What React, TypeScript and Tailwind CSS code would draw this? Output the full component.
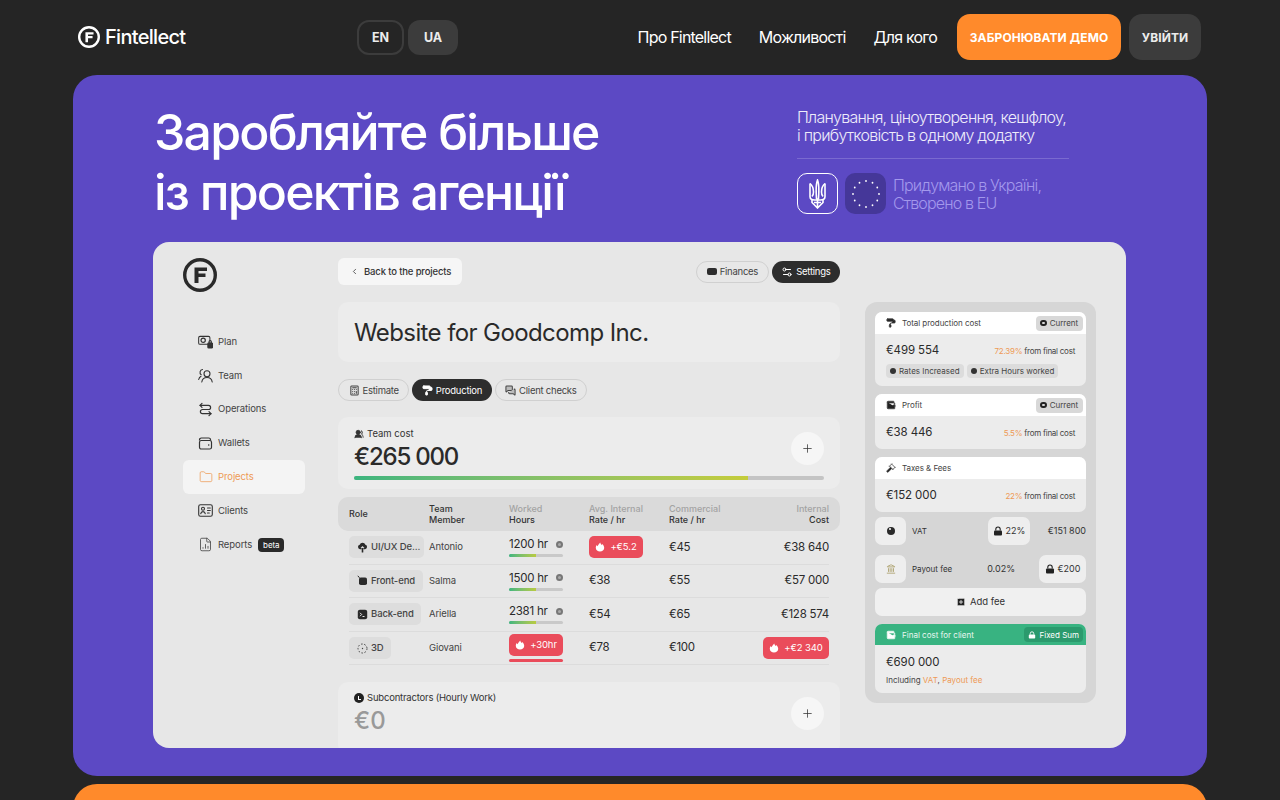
import React from 'react';
import {
  Calculator,
  ChevronLeft,
  FileChartColumn,
  Folder,
  Gavel,
  Landmark,
  MessagesSquare,
  PaintRoller,
  Plus,
  Settings2,
  SquarePlus,
  UsersRound,
  Wallet,
} from 'lucide-react';

const FONT = "font-['Inter','Noto_Sans',sans-serif]";

const FLogo = ({ size, stroke, color }: { size: number; stroke: number; color: string }) => (
  <svg width={size} height={size} viewBox="0 0 34 34" fill="none">
    <circle cx="17" cy="17" r={17 - (stroke * 34) / size / 2} stroke={color} strokeWidth={(stroke * 34) / size} />
    <path d="M11.500 9.500H24V13H15.500V15.500H22.500V19H15.500V25H11.500Z" fill={color} />
  </svg>
);

const PlanIcon = () => (
  <svg width="16" height="16" viewBox="0 0 16 16" fill="none" stroke="#333" strokeWidth="1.100">
    <rect x="0.700" y="2" width="12" height="8.500" rx="1.500" />
    <circle cx="5.500" cy="6.200" r="2.300" strokeWidth="1.300" />
    <rect x="10.500" y="9" width="5" height="5.500" rx="0.800" fill="#333" />
    <path d="M11.700 9V7.800a1.300 1.300 0 0 1 2.600 0V9" />
  </svg>
);

const TeamIcon = () => (
  <svg width="15" height="15" viewBox="0 0 15 15" fill="none" stroke="#333" strokeWidth="1.100" strokeLinecap="round">
    <circle cx="9" cy="5.800" r="3" />
    <path d="M3.800 14c.4-2.800 2.500-4.500 5.200-4.500s4.800 1.700 5.200 4.500" />
    <path d="M4.500 1.500a2.900 2.900 0 0 0-1.300 5.200M.7 11.500c.3-1.500 1-2.500 2.300-3.200" />
  </svg>
);

const OperationsIcon = () => (
  <svg width="15" height="15" viewBox="0 0 15 15" fill="none" stroke="#333" strokeWidth="1.200" strokeLinecap="round" strokeLinejoin="round">
    <path d="M4 1.300 2 3.300 4 5.300" />
    <path d="M2 3.300H10.500a2.100 2.100 0 0 1 0 4.200H4.500a2.100 2.100 0 0 0 0 4.200H13" />
    <path d="M11 9.700 13 11.700 11 13.700" />
  </svg>
);

const WalletIcon = () => (
  <svg width="15" height="15" viewBox="0 0 15 15" fill="none" stroke="#333" strokeWidth="1.200">
    <path d="M1.500 4.500V3.800A1.800 1.800 0 0 1 3.300 2h7.400A1.800 1.800 0 0 1 12.500 3.800V4.500" />
    <rect x="1.500" y="4.500" width="12" height="8.500" rx="1.800" />
    <circle cx="10.700" cy="9" r="0.800" fill="#333" stroke="none" />
  </svg>
);

const ClientsIcon = () => (
  <svg width="15" height="15" viewBox="0 0 15 15" fill="none" stroke="#333" strokeWidth="1.100" strokeLinecap="round">
    <rect x="0.700" y="1.800" width="13.600" height="11.400" rx="1.800" />
    <circle cx="5" cy="5.800" r="1.500" />
    <path d="M2.700 10.800c.2-1.400 1.100-2.200 2.300-2.200s2.100.8 2.300 2.200M9.500 5h2.800M9.500 7.500h2.800M9.500 10h1.800" />
  </svg>
);

const Flame = () => (
  <svg width="10" height="10" viewBox="0 0 10 10" fill="white">
    <path d="M5.200.5c.3 1.300 1 1.800 1.500 2.500.3-.3.400-.7.400-1.100 1.300 1 2.200 2.600 2.100 4.100C9.100 8.100 7.300 9.500 5 9.500S.9 8.100.800 6C.7 4.900 1.200 3.700 2 3c0 .5.100 1 .5 1.300C3 3 4 1.800 5.200.5Z" />
  </svg>
);

const LockIcon = ({ size = 10, color = '#222' }: { size?: number; color?: string }) => (
  <svg width={size} height={size} viewBox="0 0 10 10" fill="none">
    <path d="M2.800 4.500V3.200a2.200 2.200 0 0 1 4.400 0V4.500" stroke={color} strokeWidth="1.100" />
    <rect x="1" y="4.500" width="8" height="5" rx="1" fill={color} />
  </svg>
);

const UiIcon = () => (
  <svg width="11" height="11" viewBox="0 0 11 11" fill="#2a2a2a">
    <path d="M3 7.200a2.300 2.300 0 0 1-.3-4.500 3 3 0 0 1 5.700 0A2.300 2.300 0 0 1 8 7.200H6.500V6h1l-2-2-2 2h1v1.200Z" />
    <rect x="4.700" y="6" width="1.600" height="4.500" rx="0.500" />
  </svg>
);

const FrontIcon = () => (
  <svg width="11" height="11" viewBox="0 0 11 11" fill="#2a2a2a">
    <rect x="2" y="2.500" width="8" height="7.500" rx="1.800" />
    <path d="M2.500 2.800.8.800" stroke="#2a2a2a" strokeWidth="1" />
  </svg>
);

const BackIcon = () => (
  <svg width="11" height="11" viewBox="0 0 11 11" fill="none">
    <rect x="0.800" y="0.800" width="9.400" height="9.400" rx="2" fill="#2a2a2a" />
    <path d="M3 3.800 4.700 5.500 3 7.200M5.500 7.500h2" stroke="white" strokeWidth="0.900" />
  </svg>
);

const DddIcon = () => (
  <svg width="11" height="11" viewBox="0 0 11 11" fill="none">
    <circle cx="5.500" cy="5.500" r="4.500" stroke="#444" strokeWidth="1" strokeDasharray="1.600 1.600" />
    <circle cx="5.500" cy="5.500" r="0.700" fill="#444" />
  </svg>
);

const Trident = () => (
  <svg width="17" height="30" viewBox="0 0 17 30" fill="none" stroke="white" strokeWidth="1.600">
    <path d="M8.500 1C7 4.500 6.800 10 7.500 19.500L8.500 21 9.500 19.500C10.200 10 10 4.500 8.500 1Z" />
    <path d="M1 4.500V17.500C1 20 2.500 21 5.500 21H8.500" />
    <path d="M16 4.500V17.500C16 20 14.500 21 11.500 21H8.500" />
    <path d="M1 4.500C3.500 6.500 4.500 9.500 4.500 13 4.500 15 4 16.500 3 17.500M16 4.500C13.500 6.500 12.500 9.500 12.500 13 12.500 15 13 16.500 14 17.500" />
    <path d="M3 21V23.500L8.500 29 14 23.500V21M5 23.500H12M8.500 21V29" />
  </svg>
);

const EuStars = () => (
  <svg width="30" height="30" viewBox="-15 -15 30 30" fill="white">
    {Array.from({ length: 12 }).map((_, i) => {
      const a = (i * Math.PI) / 6;
      return <circle key={i} cx={Math.sin(a) * 13} cy={-Math.cos(a) * 13} r="0.900" />;
    })}
  </svg>
);

const navItems = [
  { label: 'Plan', icon: <PlanIcon /> },
  { label: 'Team', icon: <TeamIcon /> },
  { label: 'Operations', icon: <OperationsIcon /> },
  { label: 'Wallets', icon: <WalletIcon /> },
  { label: 'Projects', icon: <Folder size={14} strokeWidth={1.300} />, active: true },
  { label: 'Clients', icon: <ClientsIcon /> },
  { label: 'Reports', icon: <FileChartColumn size={15} strokeWidth={1.300} />, beta: true },
];

const Sidebar = () => (
  <div className="w-[122px] shrink-0">
    <FLogo size={34} stroke={3.400} color="#2a2a2a" />
    <div className="mt-[33px] flex flex-col">
      {navItems.map((item) => (
        <div
          key={item.label}
          className={`flex h-[33.800px] items-center gap-[5px] rounded-[6px] pl-[15px] text-[9.500px] tracking-[-0.100px] ${
            item.active ? 'bg-[#f4f4f4] text-[#ee9a55]' : 'text-[#444]'
          }`}
        >
          <span className="flex w-[15px] justify-center">{item.icon}</span>
          <span>{item.label}</span>
          {item.beta && (
            <span className="ml-[1px] rounded-[4px] bg-[#2a2a2a] px-[5px] py-[1px] text-[8px] text-white">beta</span>
          )}
        </div>
      ))}
    </div>
  </div>
);

const Pill = ({ icon, label, active }: { icon: React.ReactNode; label: string; active?: boolean }) => (
  <div
    className={`flex h-[22px] items-center gap-[3px] rounded-full px-[9.500px] text-[9.500px] tracking-[-0.250px] ${
      active ? 'bg-[#2d2d2d] text-white' : 'border border-[#d0d0d0] text-[#444]'
    }`}
  >
    {icon}
    <span className="pt-[2px]">{label}</span>
  </div>
);

const RoundPlus = () => (
  <div className="flex h-[33px] w-[33px] items-center justify-center rounded-full bg-[#f6f6f6]">
    <Plus size={13} strokeWidth={1.400} color="#333" />
  </div>
);

const RedBadge = ({ label, className = '' }: { label: string; className?: string }) => (
  <div
    className={`flex h-[22px] items-center justify-center gap-[5px] rounded-[5px] bg-[#ea4c5b] text-[9.500px] tracking-[-0.100px] text-white ${className}`}
  >
    <Flame />
    {label}
  </div>
);

const Hours = ({ value }: { value: string }) => (
  <div>
    <div className="flex w-[54px] items-center justify-between text-[11.500px] leading-[14px] tracking-[-0.250px] text-[#2a2a2a]">
      {value}
      <span className="h-[7px] w-[7px] rounded-full border-2 border-[#777] bg-[#aaa]" />
    </div>
    <div className="mt-[3px] flex h-[3px] w-[54px] overflow-hidden rounded-full bg-[#c9c9c9]">
      <div className="w-[27px] bg-gradient-to-r from-[#3bb57f] to-[#b8cb3f]" />
    </div>
  </div>
);

const rows = [
  { role: 'UI/UX De...', w: 'w-[75px]', icon: <UiIcon />, name: 'Antonio', hours: <Hours value="1200 hr" />, avg: <RedBadge label="+€5.2" className="w-[54px]" />, comm: '€45', cost: '€38 640' },
  { role: 'Front-end', w: 'w-[74px]', icon: <FrontIcon />, name: 'Salma', hours: <Hours value="1500 hr" />, avg: '€38', comm: '€55', cost: '€57 000' },
  { role: 'Back-end', w: 'w-[72px]', icon: <BackIcon />, name: 'Ariella', hours: <Hours value="2381 hr" />, avg: '€54', comm: '€65', cost: '€128 574' },
  {
    role: '3D',
    w: 'w-[42px]',
    icon: <DddIcon />,
    name: 'Giovani',
    hours: (
      <div className="w-[54px]">
        <RedBadge label="+30hr" />
        <div className="mt-[3px] h-[3px] rounded-full bg-[#ea4c5b]" />
      </div>
    ),
    avg: '€78',
    comm: '€100',
    cost: <RedBadge label="+€2 340" className="ml-auto w-[66px]" />,
  },
];

const Head = ({ top, bottom, right }: { top: string; bottom: string; right?: boolean }) => (
  <div className={`text-[9px] font-medium leading-[11.500px] ${right ? 'text-right' : ''}`}>
    <div className="text-[#a3a3a3]">{top}</div>
    <div className="text-[#333]">{bottom}</div>
  </div>
);

const MainColumn = () => (
  <div className="w-[502px] shrink-0">
    <div className="flex h-[27px] items-center justify-between">
      <div className="flex h-[27px] w-[124px] items-center gap-[5px] rounded-[6px] bg-[#f6f6f6] pl-[12px] text-[9.500px] font-medium tracking-[-0.150px] text-[#333]">
        <ChevronLeft size={9} strokeWidth={2} />
        <span className="pt-[2px]">Back to the projects</span>
      </div>
      <div className="flex gap-[3px]">
        <Pill label="Finances" icon={<span className="h-[7px] w-[10px] rounded-[2px] bg-[#2d2d2d]" />} />
        <Pill active label="Settings" icon={<Settings2 size={12} />} />
      </div>
    </div>

    <div className="mt-[17px] flex h-[60px] items-center rounded-[10px] bg-[#ececec] pl-[16px] pt-[1px] text-[24px] tracking-[-0.600px] text-[#2a2a2a]">
      Website for Goodcomp Inc.
    </div>

    <div className="mt-[17px] flex gap-[3px]">
      <Pill label="Estimate" icon={<Calculator size={11} fill="#dcdcdc" strokeWidth={2.200} />} />
      <Pill active label="Production" icon={<PaintRoller size={11} fill="white" />} />
      <Pill label="Client checks" icon={<MessagesSquare size={11} fill="#bbb" strokeWidth={2.200} />} />
    </div>

    <div className="relative mt-[16px] h-[72px] rounded-[10px] bg-[#ececec] px-[16px] pt-[10px]">
      <div className="flex items-center gap-[3px] text-[9.500px] leading-[13px] text-[#333]">
        <UsersRound size={10} fill="#333" />
        Team cost
      </div>
      <div className="pt-[1px] text-[24px] font-medium leading-[32px] tracking-[-1.200px] text-[#2a2a2a]">€265 000</div>
      <div className="mt-[3px] flex h-[4px] overflow-hidden rounded-full bg-[#c4c4c4]">
        <div className="w-[394px] bg-gradient-to-r from-[#3bb57f] to-[#c4cc3a]" />
      </div>
      <div className="absolute right-[16px] top-[15px]">
        <RoundPlus />
      </div>
    </div>

    <div className="mt-[8px] grid h-[34px] grid-cols-[80px_80px_80px_80px_80px_1fr] items-center rounded-[10px] bg-[#dadada] px-[11px]">
      <div className="text-[9px] font-medium text-[#333]">Role</div>
      <div className="text-[9px] font-medium leading-[11.500px] text-[#333]">
        Team
        <br />
        Member
      </div>
      <Head top="Worked" bottom="Hours" />
      <Head top="Avg. Internal" bottom="Rate / hr" />
      <Head top="Commercial" bottom="Rate / hr" />
      <Head top="Internal" bottom="Cost" right />
    </div>

    <div className="mx-[11px]">
      {rows.map((r) => (
        <div
          key={r.name}
          className="grid h-[33.600px] grid-cols-[80px_80px_80px_80px_80px_1fr] items-center border-b border-[#dcdcdc] text-[11.500px] tracking-[-0.250px] text-[#2a2a2a]"
        >
          <div className={`flex h-[22px] items-center gap-[3px] rounded-[5px] bg-[#dddddd] pl-[8px] text-[9.500px] font-medium tracking-[-0.100px] text-[#444] ${r.w}`}>
            {r.icon}
            {r.role}
          </div>
          <div className="text-[9.500px] tracking-[-0.100px] text-[#444]">{r.name}</div>
          <div>{r.hours}</div>
          <div>{r.avg}</div>
          <div>{r.comm}</div>
          <div className="text-right">{r.cost}</div>
        </div>
      ))}
    </div>

    <div className="relative mt-[17px] h-[72px] rounded-[10px] bg-[#ececec] px-[16px] pt-[9px]">
      <div className="flex items-center gap-[3px] text-[9.500px] leading-[13px] tracking-[-0.200px] text-[#333]">
        <span className="flex h-[10px] w-[10px] items-center justify-center rounded-full bg-[#222]">
          <span className="h-[4px] w-[3px] border-b border-l border-white" />
        </span>
        Subcontractors (Hourly Work)
      </div>
      <div className="pt-[1px] text-[24px] font-medium leading-[32px] text-[#999]">€0</div>
      <div className="absolute right-[16px] top-[15px]">
        <RoundPlus />
      </div>
    </div>
  </div>
);

const Current = () => (
  <div className="flex h-[15px] items-center gap-[3px] rounded-[4px] bg-[#d8d8d8] px-[4.500px] text-[8px] text-[#444]">
    <span className="h-[6.500px] w-[6.500px] rounded-full border-2 border-[#222]" />
    Current
  </div>
);

const CostCard = ({
  icon,
  title,
  value,
  percent,
  current,
  children,
}: {
  icon: React.ReactNode;
  title: string;
  value: string;
  percent: string;
  current?: boolean;
  children?: React.ReactNode;
}) => (
  <div className="overflow-hidden rounded-[7px] bg-[#ececec]">
    <div className="flex h-[22px] items-center justify-between bg-white pl-[11px] pr-[3.500px] text-[8px] tracking-[-0.050px] text-[#444]">
      <div className="flex items-center gap-[6px]">
        <span className="flex w-[10px] justify-center">{icon}</span>
        {title}
      </div>
      {current && <Current />}
    </div>
    <div className="flex h-[33px] items-center justify-between px-[11px] pt-[1px]">
      <span className="text-[11.500px] tracking-[-0.100px] text-[#2a2a2a]">{value}</span>
      <span className="text-[8px] tracking-[-0.250px] text-[#444]">
        <span className="text-[#ee9a55]">{percent}</span> from final cost
      </span>
    </div>
    {children}
  </div>
);

const Tag = ({ label }: { label: string }) => (
  <div className="flex h-[14px] items-center gap-[3px] rounded-[4px] bg-[#dcdcdc] px-[4px] text-[8px] text-[#444]">
    <span className="h-[6px] w-[6px] rounded-full bg-[#333]" />
    {label}
  </div>
);

const FeeBox = ({ children, className = '' }: { children: React.ReactNode; className?: string }) => (
  <div className={`flex h-[28px] items-center justify-center gap-[3px] rounded-[7px] bg-[#eeeeee] ${className}`}>{children}</div>
);

const RightColumn = () => (
  <div className="flex h-[401px] w-[231px] shrink-0 flex-col rounded-[12px] bg-[#d6d6d6] px-[10px] pt-[10px]">
    <CostCard
      icon={<PaintRoller size={10} fill="#222" />}
      title="Total production cost"
      value="€499 554"
      percent="72.39%"
      current
    >
      <div className="-mt-[3px] flex gap-[3px] px-[11px] pb-[8px]">
        <Tag label="Rates Increased" />
        <Tag label="Extra Hours worked" />
      </div>
    </CostCard>
    <div className="mt-[8px]">
      <CostCard icon={<Wallet size={10} fill="#222" />} title="Profit" value="€38 446" percent="5.5%" current />
    </div>
    <div className="mt-[8px]">
      <CostCard icon={<Gavel size={10} fill="#222" />} title="Taxes & Fees" value="€152 000" percent="22%" />
    </div>

    <div className="mt-[5px] flex h-[28px] items-center text-[9px] text-[#333]">
      <FeeBox className="w-[31px]">
        <span className="relative h-[8px] w-[8px] rounded-full bg-[#2a2a2a]">
          <span className="absolute left-[2px] top-[1px] h-[2px] w-[2px] rounded-full bg-white" />
        </span>
      </FeeBox>
      <span className="ml-[6px] text-[8px]">VAT</span>
      <FeeBox className="ml-[auto] w-[42px]">
        <LockIcon />
        22%
      </FeeBox>
      <span className="ml-[17px] w-[39px] text-right">€151 800</span>
    </div>
    <div className="mt-[10px] flex h-[28px] items-center text-[9px] text-[#333]">
      <FeeBox className="w-[31px]">
        <Landmark size={10} color="#a89c66" />
      </FeeBox>
      <span className="ml-[6px] text-[8px]">Payout fee</span>
      <span className="ml-[auto]">0.02%</span>
      <FeeBox className="ml-[24px] w-[47px]">
        <LockIcon />
        €200
      </FeeBox>
    </div>
    <div className="mt-[5px] flex h-[28px] items-center justify-center gap-[4px] rounded-[7px] bg-[#f0f0f0] text-[9.500px] text-[#333]">
      <SquarePlus size={10} fill="#222" color="#eee" />
      Add fee
    </div>

    <div className="mt-[8px] overflow-hidden rounded-[7px] bg-[#ececec]">
      <div className="flex h-[21px] items-center justify-between bg-[#38b381] pl-[11px] pr-[3px] text-[8px] text-[#e9f7f1]">
        <div className="flex items-center gap-[6px]">
          <Wallet size={10} fill="white" />
          Final cost for client
        </div>
        <div className="flex h-[15px] items-center gap-[3px] rounded-[4px] bg-[#2b9a6d] px-[4px] text-white">
          <LockIcon size={8} color="white" />
          Fixed Sum
        </div>
      </div>
      <div className="h-[48px] px-[11px] pt-[10px]">
        <div className="text-[11.500px] leading-[14px] tracking-[-0.100px] text-[#2a2a2a]">€690 000</div>
        <div className="mt-[5px] text-[8px] text-[#444]">
          Including <span className="text-[#ee9a55]">VAT</span>, <span className="text-[#ee9a55]">Payout fee</span>
        </div>
      </div>
    </div>
  </div>
);

export default function App() {
  return (
    <div className={`flex h-[800px] flex-col overflow-hidden bg-[#252525] ${FONT}`}>
      <header className="flex h-[75px] shrink-0 items-center pb-[1px] pl-[78px] pr-[79px]">
        <div className="flex w-[279px] items-center gap-[5px] text-[20px] font-medium tracking-[-0.700px] text-white">
          <FLogo size={22} stroke={2.400} color="white" />
          Fintellect
        </div>
        <div className="flex gap-[4px] text-[12.500px] font-bold text-[#ececec]">
          <div className="flex h-[35px] w-[47px] items-center justify-center rounded-[12px] border-2 border-[#3c3c3c] pt-[2px]">EN</div>
          <div className="flex h-[35px] w-[50px] items-center justify-center rounded-[12px] bg-[#3c3c3c] pt-[2px]">UA</div>
        </div>
        <nav className="ml-auto flex items-center text-[16px] tracking-[-0.800px] text-white">
          <span>Про Fintellect</span>
          <span className="ml-[28px]">Можливості</span>
          <span className="ml-[28px]">Для кого</span>
          <div className="ml-[20px] flex h-[46px] w-[164px] items-center justify-center rounded-[13px] bg-[#ff8a2b] pt-[1px] text-[12px] font-bold tracking-[0.100px]">
            ЗАБРОНЮВАТИ ДЕМО
          </div>
          <div className="ml-[8px] flex h-[46px] w-[72px] items-center justify-center rounded-[13px] bg-[#3c3c3c] pt-[1px] text-[12px] font-bold tracking-[0.100px] text-[#ececec]">
            УВІЙТИ
          </div>
        </nav>
      </header>

      <main className="mx-[73px] h-[701px] shrink-0 overflow-hidden rounded-[24px] bg-[#5c49c4]">
        <div className="flex h-[167px] justify-between pl-[81px] pr-[138px] pt-[27px]">
          <h1 className="text-[50px] font-medium leading-[60px] tracking-[-1.800px] text-white">
            Заробляйте більше
            <br />
            із проектів агенції
          </h1>
          <div className="w-[272px] pt-[6px]">
            <p className="whitespace-nowrap text-[16px] font-light leading-[18px] tracking-[-0.750px] text-[#eeecfa]">
              Планування, ціноутворення, кешфлоу,
              <br />і прибутковість в одному додатку
            </p>
            <div className="mt-[14px] h-px bg-[#7a6ad0]" />
            <div className="mt-[14px] flex items-center">
              <div className="flex h-[41px] w-[41px] items-center justify-center rounded-[10px] border border-white">
                <Trident />
              </div>
              <div className="ml-[7px] flex h-[41px] w-[41px] items-center justify-center rounded-[10px] bg-[#453799]">
                <EuStars />
              </div>
              <p className="ml-[7px] whitespace-nowrap text-[16px] font-light leading-[18px] tracking-[-0.850px] text-[#a398ec]">
                Придумано в Україні,
                <br />
                Створено в EU
              </p>
            </div>
          </div>
        </div>

        <div className="ml-[80px] mr-[81px] flex h-[506px] gap-[33px] overflow-hidden rounded-[16px] bg-[#e7e7e7] pl-[30px] pt-[16px]">
          <Sidebar />
          <MainColumn />
          <div className="ml-[-8px] pt-[44px]">
            <RightColumn />
          </div>
        </div>
      </main>

      <div className="mx-[73px] mt-[8px] h-[60px] shrink-0 rounded-t-[24px] bg-[#ff8a2b]" />
    </div>
  );
}
